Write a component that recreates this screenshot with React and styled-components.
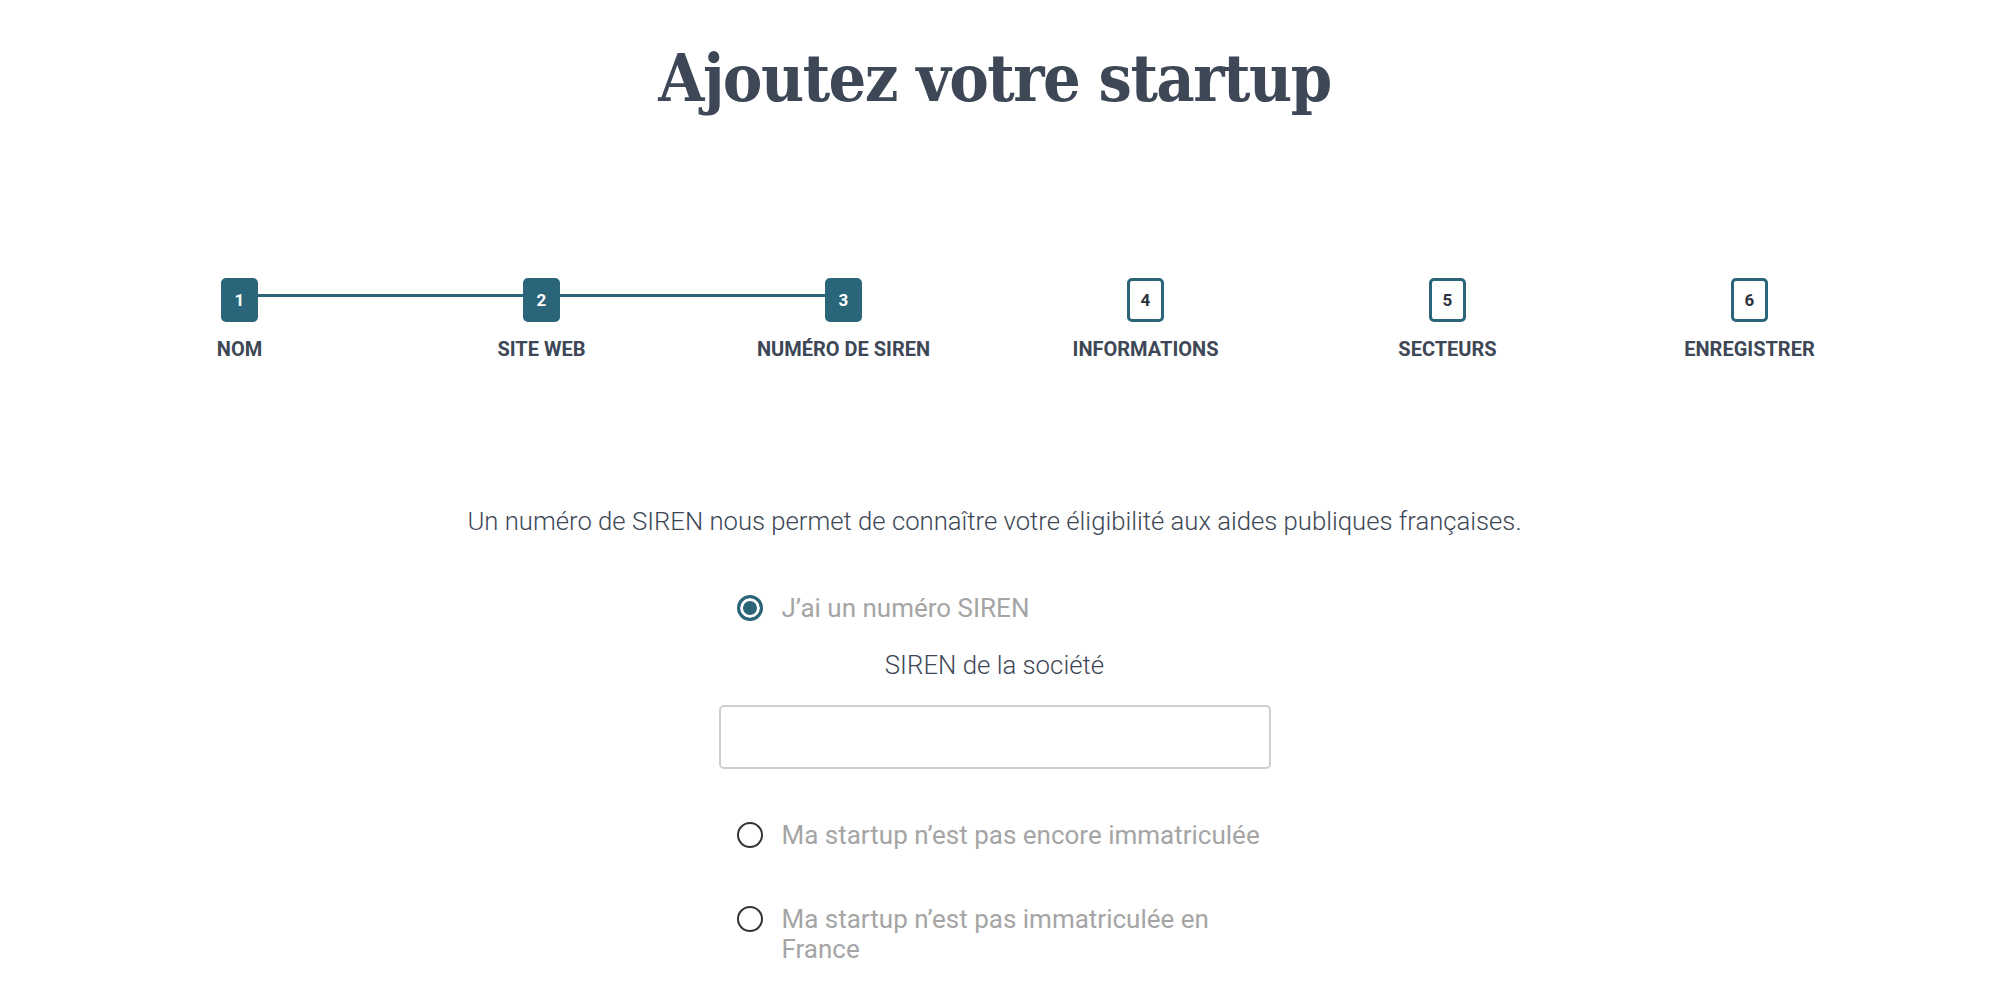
import React, { useState } from 'react';
import styled, { createGlobalStyle } from 'styled-components';

const colors = {
  slate: '#3d4756',
  teal: '#2b6579',
  grey: '#a5a5a5',
  border: '#cfcfcf',
};

const GlobalStyle = createGlobalStyle`
  body {
    margin: 0;
    background: #fff;
    font-family: Roboto, 'Liberation Sans', sans-serif;
    color: ${colors.slate};
  }
`;

const Page = styled.div`
  padding: 38px 10px 0 0;
  display: flex;
  flex-direction: column;
  align-items: center;
`;

const Title = styled.h1`
  margin: 0;
  font-family: 'DejaVu Serif Condensed', 'DejaVu Serif', 'Liberation Serif', serif;
  font-weight: 700;
  font-size: 66px;
  line-height: 80px;
  letter-spacing: -1.5px;
  color: ${colors.slate};
`;

const Stepper = styled.ol`
  list-style: none;
  margin: 160px 0 0;
  padding: 0;
  width: 1812px;
  display: grid;
  grid-template-columns: repeat(6, 1fr);
`;

const Step = styled.li`
  position: relative;
  display: flex;
  flex-direction: column;
  align-items: center;

  &::after {
    content: '';
    display: ${(p) => (p.$linked ? 'block' : 'none')};
    position: absolute;
    top: 16px;
    left: 50%;
    width: 100%;
    height: 3px;
    background: ${colors.teal};
  }
`;

const StepBox = styled.span`
  position: relative;
  z-index: 1;
  box-sizing: border-box;
  width: 37px;
  height: 44px;
  border-radius: 5px;
  border: 3px solid ${colors.teal};
  background: ${(p) => (p.$done ? colors.teal : '#fff')};
  color: ${(p) => (p.$done ? '#fff' : '#2d3340')};
  display: flex;
  align-items: center;
  justify-content: center;
  font-weight: 700;
  font-size: 17px;
`;

const StepLabel = styled.span`
  margin-top: 15px;
  font-weight: 700;
  font-size: 20px;
  line-height: 24px;
  text-transform: uppercase;
  color: ${colors.slate};
`;

const Intro = styled.p`
  margin: 145px 0 0;
  font-weight: 300;
  font-size: 25.7px;
  line-height: 30px;
  color: ${colors.slate};
`;

const Form = styled.div`
  width: 552px;
  margin-top: 57px;
  display: flex;
  flex-direction: column;
`;

const Option = styled.label`
  display: flex;
  align-items: flex-start;
  gap: 19px;
  padding: 0 0 0 18px;
  cursor: pointer;
`;

const Radio = styled.span`
  flex: none;
  box-sizing: border-box;
  width: 26px;
  height: 26px;
  margin-top: 2px;
  border-radius: 50%;
  border: ${(p) => (p.$checked ? `3px solid ${colors.teal}` : '2px solid #333')};
  background: ${(p) => (p.$checked ? colors.teal : '#fff')};
  box-shadow: ${(p) => (p.$checked ? 'inset 0 0 0 3px #fff' : 'none')};
`;

const OptionText = styled.span`
  font-size: 26px;
  line-height: 30px;
  color: ${colors.grey};
`;

const FieldLabel = styled.div`
  margin-top: 27px;
  text-align: center;
  font-weight: 300;
  font-size: 25.8px;
  line-height: 30px;
  color: ${colors.slate};
`;

const Input = styled.input`
  box-sizing: border-box;
  margin: 25px 0 51px;
  width: 100%;
  height: 64px;
  border: 2px solid ${colors.border};
  border-radius: 5px;
  outline: none;
  font-family: inherit;
  font-size: 22px;
  padding: 0 16px;
`;

const OptionGap = styled.div`
  height: ${(p) => p.$h}px;
`;

const steps = ['Nom', 'Site web', 'Numéro de SIREN', 'Informations', 'Secteurs', 'Enregistrer'];
const current = 3;

const options = [
  { id: 'siren', text: 'J’ai un numéro SIREN' },
  { id: 'pending', text: 'Ma startup n’est pas encore immatriculée' },
  { id: 'abroad', text: 'Ma startup n’est pas immatriculée en France' },
];

const App = () => {
  const [choice, setChoice] = useState('siren');

  const renderOption = (o) => (
    <Option key={o.id} onClick={() => setChoice(o.id)}>
      <Radio $checked={choice === o.id} />
      <OptionText>{o.text}</OptionText>
    </Option>
  );

  return (
    <>
      <GlobalStyle />
      <Page>
        <Title>Ajoutez votre startup</Title>
        <Stepper>
          {steps.map((label, i) => (
            <Step key={label} $linked={i + 1 < current}>
              <StepBox $done={i + 1 <= current}>{i + 1}</StepBox>
              <StepLabel>{label}</StepLabel>
            </Step>
          ))}
        </Stepper>
        <Intro>Un numéro de SIREN nous permet de connaître votre éligibilité aux aides publiques françaises.</Intro>
        <Form>
          {renderOption(options[0])}
          {choice === 'siren' && (
            <>
              <FieldLabel>SIREN de la société</FieldLabel>
              <Input type="text" />
            </>
          )}
          {renderOption(options[1])}
          <OptionGap $h={54} />
          {renderOption(options[2])}
        </Form>
      </Page>
    </>
  );
};

export default App;
